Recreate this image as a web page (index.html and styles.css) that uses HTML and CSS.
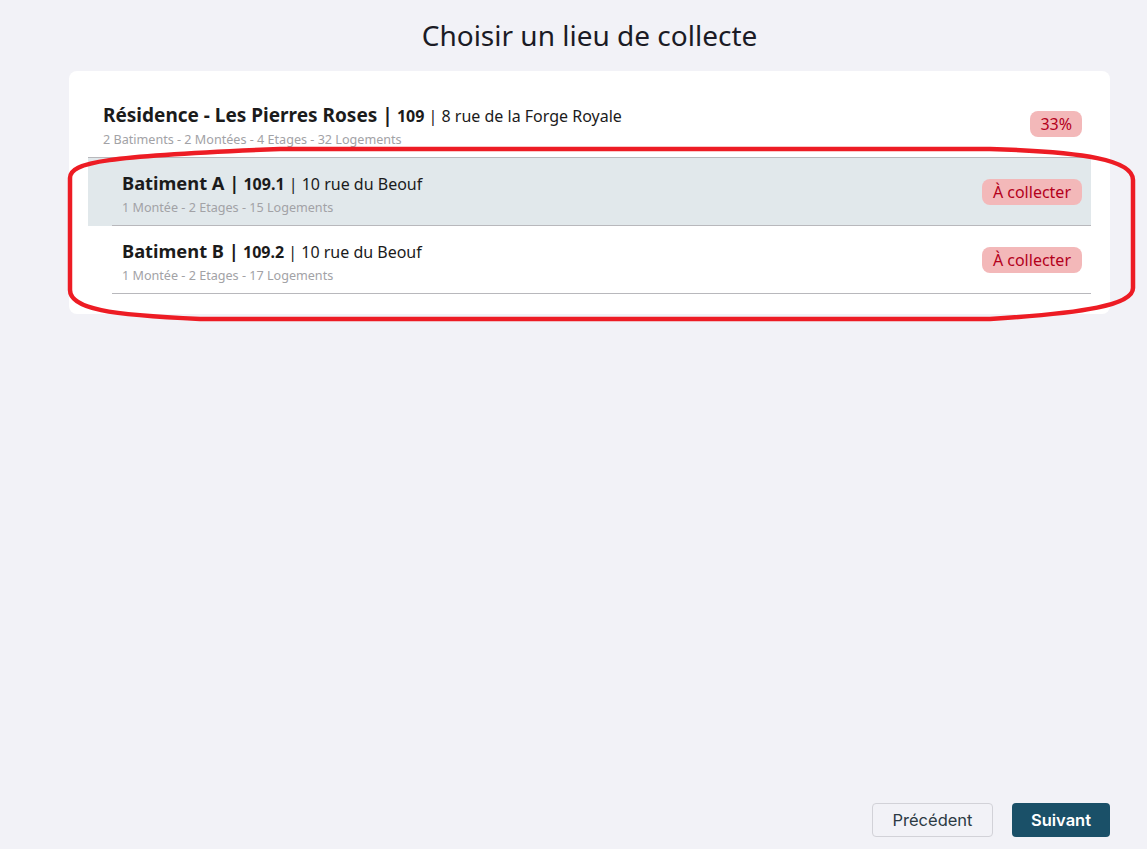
FILE: index.html
```html
<!DOCTYPE html>
<html lang="fr">
<head>
<meta charset="utf-8">
<title>Choisir un lieu de collecte</title>
<link rel="stylesheet" href="styles.css">
</head>
<body>
<div class="page">
  <h1 class="title">Choisir un lieu de collecte</h1>
  <div class="card">
    <div class="item item-residence">
      <div class="item-text">
        <div class="item-title"><span class="name res">Résidence - Les Pierres Roses |</span> <span class="code">109</span> | <span class="addr">8 rue de la Forge Royale</span></div>
        <div class="item-sub">2 Batiments - 2 Montées - 4 Etages - 32 Logements</div>
      </div>
      <span class="badge badge-pct">33%</span>
    </div>
    <div class="item item-child selected">
      <div class="item-inner">
        <div class="item-text">
          <div class="item-title"><span class="name">Batiment A |</span> <span class="code">109.1</span> | <span class="addr">10 rue du Beouf</span></div>
          <div class="item-sub">1 Montée - 2 Etages - 15 Logements</div>
        </div>
        <span class="badge">À collecter</span>
      </div>
    </div>
    <div class="item item-child">
      <div class="item-inner">
        <div class="item-text">
          <div class="item-title"><span class="name">Batiment B |</span> <span class="code">109.2</span> | <span class="addr">10 rue du Beouf</span></div>
          <div class="item-sub">1 Montée - 2 Etages - 17 Logements</div>
        </div>
        <span class="badge">À collecter</span>
      </div>
    </div>
  </div>
  <div class="footer">
    <button class="btn btn-secondary">Précédent</button>
    <button class="btn btn-primary">Suivant</button>
  </div>
  <svg class="annotation" width="1147" height="849" viewBox="0 0 1147 849" aria-hidden="true">
    <path d="M 70 178 C 70 162, 105 156, 280 149 L 990 149 C 1085 152, 1133 160, 1133 180 L 1133 288 C 1133 305, 1085 313, 990 319 L 200 319 C 110 315, 70 309, 70 290 Z" fill="none" stroke="#ed1c24" stroke-width="4.5" stroke-linejoin="round"/>
  </svg>
</div>
</body>
</html>
```
FILE: styles.css
```css
* { box-sizing: border-box; }
html, body { margin: 0; padding: 0; }
body {
  background: #f2f2f7;
  font-family: "Noto Sans", "Open Sans", sans-serif;
  color: #1b1b1b;
}
.page {
  position: relative;
  height: 849px;
  display: flex;
  flex-direction: column;
  padding: 0 37px 12px 69px;
}
.title {
  margin: 16px 0 0;
  text-align: center;
  font-size: 28px;
  line-height: 38px;
  font-weight: 400;
  color: #1b1b25;
}
.card {
  margin-top: 17px;
  background: #ffffff;
  border-radius: 8px;
  padding: 19px 19px 20px;
}
.item {
  display: flex;
  align-items: center;
}
.item-residence {
  height: 68px;
  padding: 0 9px 0 15px;
  border-bottom: 1px solid #b8b8bc;
}
.item-child {
  padding-left: 24px;
}
.item-child.selected {
  background: #e1e8eb;
}
.item-inner {
  flex: 1;
  display: flex;
  align-items: center;
  height: 68px;
  padding: 0 9px 0 10px;
  border-bottom: 1px solid #b8b8bc;
}
.item-text { flex: 1; padding-top: 4px; }
.item-title {
  font-size: 16px;
  line-height: 24px;
  white-space: nowrap;
}
.item-title .name { font-weight: 700; font-size: 18.3px; }
.item-title .name.res { font-size: 19px; }
.item-title .code { font-weight: 700; }
.item-sub {
  font-size: 12.6px;
  line-height: 18px;
  color: #a2a2a6;
  margin-top: 3px;
}
.badge {
  background: #f3b8b9;
  color: #b4001c;
  font-size: 16px;
  line-height: 26px;
  padding: 0 11px;
  border-radius: 8px;
}
.badge-pct { padding: 0 10px; }
.footer {
  margin-top: auto;
  display: flex;
  justify-content: flex-end;
  gap: 19px;
}
.btn {
  font-family: Inter, "Noto Sans", sans-serif;
  font-size: 16.5px;
  height: 34px;
  border-radius: 4px;
  cursor: pointer;
}
.btn-secondary {
  width: 121px;
  background: #f2f2f7;
  border: 1px solid #d2d2d8;
  color: #2c3a44;
  font-weight: 400;
}
.btn-primary {
  width: 98px;
  background: #1a5068;
  border: none;
  color: #ffffff;
  font-weight: 600;
}
.annotation {
  position: absolute;
  top: 0;
  left: 0;
  pointer-events: none;
}
```
